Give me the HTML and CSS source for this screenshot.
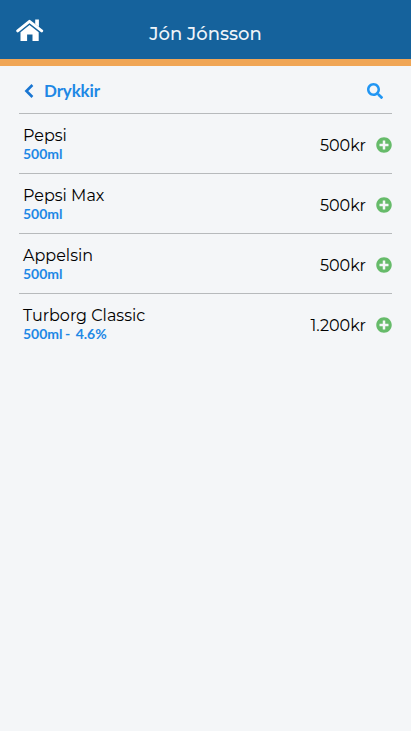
FILE: index.html
```html
<!DOCTYPE html>
<html lang="is">
<head>
<meta charset="utf-8">
<meta name="viewport" content="width=device-width, initial-scale=1">
<title>Drykkir</title>
<link rel="stylesheet" href="styles.css">
</head>
<body>
<svg class="symbols" aria-hidden="true">
  <symbol id="plus" viewBox="0 0 512 512"><path d="M256 8C119 8 8 119 8 256s111 248 248 248 248-111 248-248S393 8 256 8zm144 276c0 6.600-5.400 12-12 12h-92v92c0 6.600-5.400 12-12 12h-56c-6.600 0-12-5.400-12-12v-92h-92c-6.600 0-12-5.400-12-12v-56c0-6.600 5.400-12 12-12h92v-92c0-6.600 5.400-12 12-12h56c6.600 0 12 5.400 12 12v92h92c6.600 0 12 5.400 12 12v56z"/></symbol>
</svg>
<header class="topbar">
  <svg class="home" viewBox="0 0 28 23" aria-label="Heim"><path d="M1.700 11.900 13.500 2.300 25.700 11.900" fill="none" stroke="#fff" stroke-width="2.900" stroke-linecap="round" stroke-linejoin="round"/><path d="M19.200.4h3.700v7.700l-3.700-3zM4.500 13.200l9-7.300 9.200 7.300v8.900h-6.200v-6.600h-5.400v6.600H4.500z" fill="#fff"/></svg>
  <h1 class="user">Jón Jónsson</h1>
</header>
<main class="content">
  <div class="category">
    <svg class="back" viewBox="0 0 10 14"><path d="M8.400 1 2.400 7 8.400 13" fill="none" stroke="currentColor" stroke-width="2.600"/></svg>
    <h2 class="category-name">Drykkir</h2>
    <svg class="search" viewBox="0 0 512 512"><path d="M505 442.700L405.300 343c-4.500-4.500-10.600-7-17-7H372c27.600-35.300 44-79.700 44-128C416 93.100 322.900 0 208 0S0 93.100 0 208s93.100 208 208 208c48.300 0 92.700-16.400 128-44v16.300c0 6.400 2.500 12.500 7 17l99.700 99.700c9.400 9.400 24.600 9.400 33.900 0l28.300-28.300c9.400-9.400 9.400-24.600.1-34zM208 336c-70.700 0-128-57.200-128-128 0-70.700 57.200-128 128-128 70.700 0 128 57.200 128 128 0 70.700-57.200 128-128 128z"/></svg>
  </div>
  <ul class="products">
    <li class="product"><div class="info"><span class="name">Pepsi</span><span class="size">500ml</span></div><span class="price">500kr</span><svg class="add"><use href="#plus"/></svg></li>
    <li class="product"><div class="info"><span class="name">Pepsi Max</span><span class="size">500ml</span></div><span class="price">500kr</span><svg class="add"><use href="#plus"/></svg></li>
    <li class="product"><div class="info"><span class="name">Appelsin</span><span class="size">500ml</span></div><span class="price">500kr</span><svg class="add"><use href="#plus"/></svg></li>
    <li class="product"><div class="info"><span class="name">Turborg Classic</span><span class="size">500ml -&nbsp; 4.6%</span></div><span class="price">1.200kr</span><svg class="add"><use href="#plus"/></svg></li>
  </ul>
</main>
</body>
</html>
```
FILE: styles.css
```css
* { box-sizing: border-box; }
body { margin: 0; min-height: 100vh; background: #f4f6f8; color: #000; font-family: Montserrat, Inter, sans-serif; }
.symbols { display: none; }
.topbar { height: 66px; background: #15629c; border-bottom: 7px solid #f0a656; display: grid; grid-template-columns: 60px 1fr 60px; align-items: start; }
.home { width: 28px; height: 23px; margin: 19px 0 0 16px; }
.user { margin: 22px 0 0; color: #eef4f9; text-align: center; font-size: 18px; line-height: 24px; font-weight: 500; white-space: nowrap; }
.content { margin: 0 19px; }
.category { height: 48px; display: flex; align-items: center; padding: 3px 9px 0 5px; border-bottom: 1px solid #b7babc; }
.back { width: 10px; height: 14px; color: #1976d2; }
.category-name { flex: 1; margin: 0 0 0 10px; font: 700 17px/22px Lato, sans-serif; letter-spacing: -0.150px; color: #1e88e5; }
.search { width: 16px; height: 16px; fill: #2196f3; }
.products { margin: 0; padding: 0; list-style: none; }
.product { height: 60px; display: flex; align-items: center; padding: 4px 0 0 4px; border-bottom: 1px solid #b7babc; }
.product:last-child { border-bottom-color: transparent; }
.info { flex: 1; display: flex; flex-direction: column; align-items: flex-start; margin-top: -3px; }
.name { font-size: 16px; line-height: 20px; font-weight: 400; white-space: nowrap; }
.size { font: 700 14px/17px Lato, sans-serif; color: #1e88e5; word-spacing: -0.600px; letter-spacing: -0.050px; margin-top: -1px; }
.price { font-size: 16px; line-height: 20px; font-weight: 400; margin-right: 10px; }
.add { width: 16px; height: 16px; fill: #66bb6a; margin-top: -1px; }
```
